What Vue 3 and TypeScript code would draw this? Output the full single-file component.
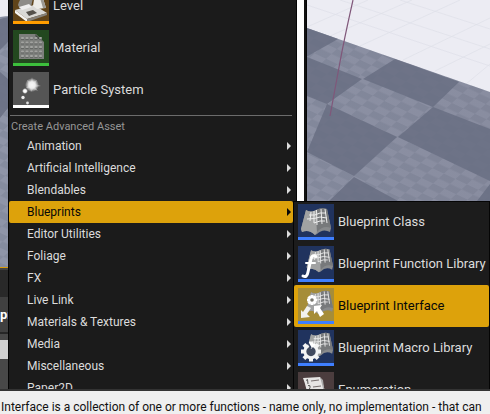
<script setup lang="ts">
type Art = 'level' | 'material' | 'particle' | 'class' | 'function' | 'interface' | 'macro' | 'enum'

interface Asset {
  label: string
  art: Art
  active?: boolean
}

const basics: Asset[] = [
  { label: 'Level', art: 'level' },
  { label: 'Material', art: 'material' },
  { label: 'Particle System', art: 'particle' },
]

const categories: string[] = [
  'Animation',
  'Artificial Intelligence',
  'Blendables',
  'Blueprints',
  'Editor Utilities',
  'Foliage',
  'FX',
  'Live Link',
  'Materials & Textures',
  'Media',
  'Miscellaneous',
  'Paper2D',
]
const openCategory = 'Blueprints'

const blueprints: Asset[] = [
  { label: 'Blueprint Class', art: 'class' },
  { label: 'Blueprint Function Library', art: 'function' },
  { label: 'Blueprint Interface', art: 'interface', active: true },
  { label: 'Blueprint Macro Library', art: 'macro' },
  { label: 'Enumeration', art: 'enum' },
]

const teeth = [0, 45, 90, 135, 180, 225, 270, 315]
const dots = [0, 1, 2, 3, 4]
</script>

<template>
  <div class="editor">
    <main class="workspace">
      <svg class="scene" viewBox="0 0 490 267" preserveAspectRatio="xMinYMin slice" aria-hidden="true">
        <defs>
          <pattern id="checks" width="2" height="2" patternUnits="userSpaceOnUse" patternTransform="matrix(11.5 5.4 5.4 -4.9 354 176)">
            <rect width="1" height="1" fill="#5f667a" />
            <rect x="1" y="1" width="1" height="1" fill="#5f667a" />
          </pattern>
          <linearGradient id="floor" x1="0" y1="0" x2="1" y2="0">
            <stop offset="0" stop-color="#8f95a8" />
            <stop offset="1" stop-color="#898da0" />
          </linearGradient>
        </defs>
        <rect width="490" height="267" fill="#ececf3" />
        <g stroke="#dedfe8" stroke-width="1" fill="none" opacity=".7">
          <path d="M307 27 368 0M403 60 490 18M466 84 490 64M307 5 490 66M340 0 490 49M400 0 490 29M330 36 412 0M360 46 460 0M435 71 490 44" />
        </g>
        <path d="M0 17 8 16 307 28 490 92V267H0Z" fill="url(#floor)" />
        <path d="M0 17 8 16 307 28 490 92V267H0Z" fill="url(#checks)" opacity=".2" />
        <g fill="#696e82" fill-opacity=".85">
          <path d="M307 28 338 39 308 56H307ZM307 57 362 79 327 104 307 96ZM395 59 459 82 433 107 363 79ZM327 104 397 137 354 176 307 152ZM433 107 490 129V181L398 137ZM354 177 398 201H329ZM490 184V201H477Z" />
          <path d="M0 19 8 17V42L0 50ZM0 72 8 79V108L0 118Z" />
        </g>
        <path d="M353 0Q344 40 340 62L330 116" fill="none" stroke="#80577a" stroke-width="1.2" />
      </svg>
      <div class="browser">
        <div class="browser-bar"></div>
        <div class="browser-title">pr</div>
        <div class="browser-gap"></div>
        <div class="browser-field"></div>
      </div>

      <nav class="menu" aria-label="Add new asset">
        <div class="menu-list">
          <button v-for="a in basics" :key="a.label" type="button" class="asset">
            <svg class="thumb" viewBox="0 0 36 36" aria-hidden="true">
              <template v-if="a.art === 'level'">
                <rect width="36" height="36" fill="#60441a" />
                <path d="M2 22 21 17 34 25 14 31Z" fill="#d9d9d6" />
                <path d="M2 22 14 31V34L2 25Z" fill="#f3f3f1" />
                <path d="M14 31 34 25V27L14 34Z" fill="#85827c" />
                <path d="M5 17Q7 8 15 8L20 10 18 19 7 21Z" fill="#8d8c88" />
                <path d="M6 19 16 16 19 19 9 22Z" fill="#eee" />
                <path d="M22 5 29 7 33 20 24 21 20 18Z" fill="#ecece8" />
                <path d="M29 7 33 20 30 20 27 10Z" fill="#9b9993" />
                <path d="M13 24 20 22 24 25 16 28Z" fill="#54514b" />
                <rect y="33" width="36" height="3" fill="#ff9c00" />
              </template>
              <template v-else-if="a.art === 'material'">
                <rect width="36" height="36" fill="#23481f" />
                <path d="M6 4H23L31 12V29H6Z" fill="#7d7f7c" />
                <path d="M22 4 31 12 28 10 23 8Z" fill="#444a43" />
                <g v-for="r in dots" :key="r">
                  <g v-for="c in dots" :key="c">
                    <rect :x="8 + c * 4.5" :y="7 + r * 4.5" width="3" height="2" rx="1" fill="#a2a3a0" />
                    <rect :x="8 + c * 4.5" :y="9 + r * 4.5" width="3" height="1" fill="#646764" />
                  </g>
                </g>
                <rect y="33" width="36" height="3" fill="#3cbf3c" />
              </template>
              <template v-else>
                <defs>
                  <radialGradient id="glow">
                    <stop offset="0" stop-color="#fff" />
                    <stop offset=".45" stop-color="#fff" stop-opacity=".9" />
                    <stop offset="1" stop-color="#fff" stop-opacity="0" />
                  </radialGradient>
                </defs>
                <rect width="36" height="36" fill="#555" />
                <circle cx="19" cy="13" r="7" fill="url(#glow)" />
                <path d="M19 5 20 10 24 8 22 12 28 14 22 15 25 19 20 17 18 20 17 16 13 16 16 13 14 8 18 10Z" fill="#eee" opacity=".4" />
                <circle cx="12" cy="19" r="3" fill="url(#glow)" />
                <circle cx="12" cy="19" r="1.6" fill="#fff" />
                <circle cx="10" cy="25.5" r="1.7" fill="#eee" />
                <circle cx="14.5" cy="31" r="1.4" fill="#ddd" />
                <rect y="33" width="36" height="3" fill="#fff" />
              </template>
            </svg>
            <span class="asset-label">{{ a.label }}</span>
          </button>

          <hr class="rule" />
          <h2 class="heading">Create Advanced Asset</h2>

          <button
            v-for="c in categories"
            :key="c"
            type="button"
            class="category"
            :class="{ open: c === openCategory }"
            aria-haspopup="menu"
            :aria-expanded="c === openCategory"
          >
            <span>{{ c }}</span>
            <svg class="arrow" viewBox="0 0 4 8" aria-hidden="true"><path d="M0 0 4 4 0 8Z" fill="currentColor" /></svg>
          </button>
        </div>
        <div class="scrollbar"></div>
      </nav>

      <nav class="submenu" aria-label="Blueprints">
        <button v-for="a in blueprints" :key="a.label" type="button" class="asset" :class="{ active: a.active }">
          <svg class="thumb" viewBox="0 0 36 36" aria-hidden="true">
            <template v-if="a.art === 'enum'">
              <rect width="36" height="36" fill="#4b3d3e" />
              <path d="M5 6 22 5Q27 13 28 31L11 33Q9 16 5 6Z" fill="#e6e5e4" />
              <path d="M22 5 25 8 28 31 26 20Z" fill="#aaa" />
              <path d="M8 8.5 9.5 7.5 10 12M10 13.5Q13 13 12 15.5L11 18H13.5" fill="none" stroke="#444" stroke-width=".9" />
              <g stroke="#77706f" stroke-width="1.2"><path d="M13 9 21 8M15 15 23 14" /></g>
              <rect y="33" width="36" height="3" fill="#966" />
            </template>
            <template v-else>
              <rect width="36" height="36" :fill="a.active ? '#a68d38' : '#20335e'" />
              <g :transform="a.art === 'class' ? undefined : 'translate(6 -1) scale(.88)'">
                <path d="M8 6Q13 9 18 6 23 3 29 5L33 24 32 28Q25 24 19 30L17 31Q11 25 4 28L3 25Z" fill="#888a8c" />
                <path d="M8 6Q13 9 18 6L19 28 17 31Q11 25 4 28L3 25Z" fill="#a1a2a2" />
                <path d="M18 6Q23 3 29 5L33 24Q25 21 19 28Z" fill="#77797b" />
                <path d="M13 8 12 17M16 7V19M18.5 6 19 21M23 5 24 20M27 5 29 19M11 11Q17 12 22 9L28 9M9 15Q17 15 22 13L29 14M16 19 22 17 27 17" fill="none" stroke="#ededed" />
              </g>
              <g v-if="a.art === 'function'" fill="none" stroke="#fff" stroke-linecap="round">
                <path d="M18 10.500Q14 8 13 13L10 26Q9 32 5 30" stroke-width="3" />
                <path d="M8 17H17" stroke-width="2" />
              </g>
              <g v-if="a.art === 'interface'">
                <g fill="#fff">
                  <rect v-for="t in teeth" :key="t" x="12.5" y="7" width="3" height="3" :transform="`rotate(${t} 14 12)`" />
                </g>
                <circle cx="14" cy="12" r="2.8" fill="#77766e" stroke="#fff" stroke-width="2" />
                <path d="M9 18 13 20 9 26 12 29 3 30 3 22 5 24Z" fill="#f1f1ef" />
                <path d="M16 18 24 17 22 20 26 26 22 29 19 23 16 26Z" fill="#fff" />
              </g>
              <g v-if="a.art === 'macro'">
                <g fill="#f4f4f4">
                  <rect v-for="t in teeth" :key="t" x="11" y="11.5" width="4" height="5" :transform="`rotate(${t} 13 21.5)`" />
                </g>
                <circle cx="13" cy="21.5" r="6.2" fill="#414a5e" stroke="#f4f4f4" stroke-width="3" />
                <path d="M11 12 18 14 13 19Z" fill="#fff" />
                <path d="M10 13 13 18" stroke="#323f5c" stroke-width="1.5" />
              </g>
              <rect y="33" width="36" height="3" fill="#3f7fff" />
            </template>
          </svg>
          <span class="asset-label">{{ a.label }}</span>
        </button>
      </nav>
    </main>
    <div class="tooltip" role="tooltip">Interface is a collection of one or more functions - name only, no implementation - that can</div>
  </div>
</template>

<style>
body {
  background: #1b1b1b;
}
</style>

<style scoped>
* {
  box-sizing: border-box;
}
.editor {
  display: flex;
  flex-direction: column;
  height: 100vh;
  overflow: hidden;
  font-family: Roboto, sans-serif;
  white-space: nowrap;
}
.workspace {
  position: relative;
  display: flex;
  flex-direction: column;
  flex: 1;
  min-height: 0;
  overflow: hidden;
}
.scene {
  display: block;
  flex: none;
  width: 100%;
  height: 267px;
}
.browser {
  flex: 1;
  border-top: 1px solid #d99b0a;
  background: #484848;
}
.browser-bar {
  height: 29px;
  border-top: 2px solid #444;
  background: #292929;
}
.browser-title {
  height: 35px;
  background: #404040;
  color: #fff;
  font-size: 13px;
  font-weight: 700;
  line-height: 36px;
}
.browser-gap {
  height: 8px;
  border-top: 2px solid #262626;
}
.browser-field {
  height: 19px;
  background: #d0d0d0;
}
.menu {
  position: absolute;
  top: 0;
  bottom: 0;
  left: 8px;
  display: flex;
  width: 299px;
  border: solid #050505;
  border-width: 0 1px;
  background: #1b1b1b;
}
.menu-list {
  flex: 1;
  margin-top: -15px;
  padding-right: 3px;
  border-right: 1px solid #050505;
}
.scrollbar {
  width: 9px;
  border-right: 2px solid #111;
  background: #fff;
}
.submenu {
  position: absolute;
  top: 201px;
  right: 0;
  left: 293px;
  border: solid #050505;
  border-width: 0 1px;
  background: #1c1c1c;
  box-shadow: inset 0 1px #050505;
}
button {
  display: flex;
  align-items: center;
  width: 100%;
  border: 0;
  border-radius: 2px;
  background: transparent;
  color: #dcdcdc;
  font-family: inherit;
  text-align: left;
}
.asset {
  gap: 4px;
  height: 42px;
  padding: 0 4px;
  font-size: 13px;
}
.asset-label {
  padding-bottom: 2px;
}
.thumb {
  flex: none;
  width: 36px;
  height: 36px;
}
.rule {
  height: 1px;
  margin: 4px 1px 0;
  border: 0;
  background: #6c6c6c;
}
.heading {
  height: 19px;
  margin: 0;
  padding-left: 2px;
  color: #969696;
  font-size: 11px;
  font-weight: 400;
  line-height: 22px;
}
.category {
  justify-content: space-between;
  height: 22px;
  padding: 0 2px 0 18px;
  font-size: 12px;
}
.arrow {
  width: 4px;
  height: 8px;
}
.category.open,
.asset.active {
  background: #dda20b;
  color: #080808;
}
.tooltip {
  flex: none;
  height: 25px;
  padding-left: 1px;
  border-top: 2px solid #333;
  overflow: hidden;
  background: #efefef;
  color: #111;
  font-size: 12px;
  line-height: 32px;
}
</style>
